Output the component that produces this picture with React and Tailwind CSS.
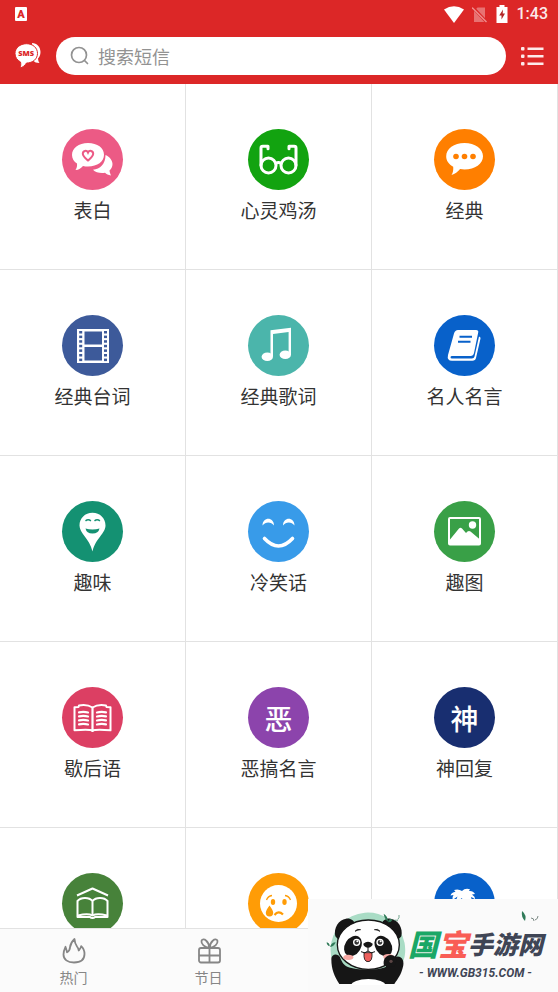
import { useState } from 'react';

const HeartChatIcon = () => (
  <>
    <path d="M43.500 26c4.500 2 7 5.500 7 9 0 3-1.300 5-3 6.500.2 2 .8 3.300 1.500 5-2.800-.3-4.500-1.300-6-2.700-4.500.8-9.500-.3-12-3 7-.6 12.500-5.800 12.500-14.800z" />
    <path d="M26 14C35.500 14 42 19 42 25.800s-6.500 11.700-16 11.700c-1.800 0-3.500-.2-5-.6-2 2.200-4 3.800-7.500 4.200 1.300-2 1.800-4 1.500-6.500-3-2-5-5-5-8.600C10 19 16.500 14 26 14z" />
    <path
      d="M26 31.500c-3-2.500-5.200-4.300-5.200-6.700 0-3 3.800-4.200 5.200-1.200 1.400-3 5.200-1.800 5.200 1.200 0 2.400-2.200 4.200-5.200 6.700z"
      fill="none"
      stroke="#ec5a85"
      strokeWidth="2"
    />
  </>
);

const GlassesIcon = () => (
  <g fill="none" stroke="white" strokeWidth="3" strokeLinecap="round" strokeLinejoin="round">
    <circle cx="20.500" cy="36.500" r="7.500" />
    <circle cx="40.500" cy="36.500" r="7.500" />
    <path d="M13 36V19q0-1.800 1.800-1.800H20v2.500M48 36V19q0-1.800-1.800-1.800H41v2.500M28 34.500q2.500-2 5 0" />
  </g>
);

const ChatIcon = () => (
  <>
    <path d="M30.500 14C41 14 49 19.500 49 27.300S41 40.500 30.500 40.500c-1.500 0-3-.1-4.400-.4-2.500 3-5 5-8.600 6 1.500-2.500 2-5 1.700-8.300-4.300-2.400-7-6-7-10.500C12.200 19.500 20 14 30.500 14z" />
    <g fill="#ff7f00">
      <circle cx="22" cy="27.500" r="2.800" />
      <circle cx="30.500" cy="27.500" r="2.800" />
      <circle cx="39" cy="27.500" r="2.800" />
    </g>
  </>
);

const FilmIcon = () => (
  <>
    <rect x="15" y="14" width="32" height="34" />
    <g fill="#3d5a9a">
      <rect x="22.500" y="16.500" width="17.500" height="13" />
      <rect x="22.500" y="32" width="17.500" height="13.500" />
      {[16, 20.6, 25.2, 29.8, 34.4, 39, 43.6].map((y) => (
        <g key={y}>
          <rect x="17.200" y={y} width="3" height="2.500" />
          <rect x="42" y={y} width="3" height="2.500" />
        </g>
      ))}
    </g>
  </>
);

const MusicIcon = () => (
  <>
    <path d="M22.500 15.200 43 12.800V40h-2.400V17L25 18.900v22.600h-2.500z" />
    <ellipse cx="19.300" cy="41.700" rx="5.700" ry="4.300" />
    <ellipse cx="37.300" cy="39.700" rx="5.700" ry="4.300" />
  </>
);

const NotebookIcon = () => (
  <>
    <path d="M24 15h18q2.800 0 2.200 2.500L40 38q-.6 3-3.500 3H18q-1.500 0-1.500 1.300t1.500 1.300h20q2 0 2.500-2L45 21.500q1.800.5 1.500 2L42 43q-.7 2.800-3.500 2.800H18q-5.300 0-4-5.800l6-21.500Q21 15 24 15z" />
    <path d="M25.500 21.800h12.500M24 26.800h12.500" stroke="#0861ca" strokeWidth="1.900" />
  </>
);

const PinIcon = () => (
  <>
    <path d="M30.500 11.800c7.500 0 13 5.500 13 12.700 0 8-9.800 12.500-13 26-3.200-13.500-13-18-13-26 0-7.200 5.500-12.700 13-12.700z" />
    <g fill="none" stroke="#149172" strokeWidth="1.500">
      <path d="M23.500 19.800q2.700-2.200 5.400 0M32.500 19.800q2.700-2.200 5.400 0" />
    </g>
    <path d="M23.500 27.500q7 1.800 14 0-1 5-7 5t-7-5z" fill="#149172" />
  </>
);

const SmileIcon = () => (
  <>
    <path d="M14.500 24.500c0-9 11.500-9 11.500 0-3-4-8.500-4-11.500 0zM35 24.500c0-9 11.500-9 11.500 0-3-4-8.500-4-11.500 0z" />
    <path d="M16.500 37.500q14 15 28 0" fill="none" stroke="white" strokeWidth="3.600" strokeLinecap="round" />
  </>
);

const ImageIcon = () => (
  <>
    <rect x="15" y="17" width="31" height="26.500" rx="1" fill="none" stroke="white" strokeWidth="2" />
    <circle cx="38.500" cy="24" r="3.700" />
    <path d="M16 38.500 25 27.500q1.500-1.500 3 0l4 4.500 1.500-1.500q1.500-1 3 0L46 38.500V43H16z" />
  </>
);

const OpenBookIcon = () => (
  <g fill="none" stroke="white" strokeLinejoin="round">
    <path d="M30.500 20.500Q25 17 17 18.500l-.5 1.500-4 .3V43.300q13-1.300 18 0 5-1.300 18 0V20.300l-4-.3-.5-1.500q-8-1.500-13.500 2z" strokeWidth="2" />
    <path d="M30.500 20.500V45" strokeWidth="2.200" />
    <path d="M17 25.300q5-.8 9 .2M17 29.300q5-.8 9 .2M17 33.300q5-.8 9 .2M17 37.300q5-.8 9 .2M35 25.500q4-1 9-.2M35 29.500q4-1 9-.2M35 33.500q4-1 9-.2M35 37.500q4-1 9-.2" strokeWidth="2.200" strokeLinecap="round" />
  </g>
);

const LibraryIcon = () => (
  <g fill="none" stroke="white" strokeWidth="2" strokeLinejoin="round">
    <path d="M15 22.500 30.500 15.500 46 22.500" />
    <path d="M30.500 28Q28 25 23 25t-7.500 3v16h12.500q1 1 2.500 1t2.500-1h12.500V28q-2.500-3-7.500-3t-7.500 3v14" />
    <path d="M16 42.500q10-2.500 14.500 0 4.500-2.500 14.500 0" />
  </g>
);

const CryIcon = () => (
  <>
    <circle cx="30.500" cy="30.500" r="18.500" />
    <g fill="#ff9c06">
      <ellipse cx="25" cy="29" rx="2.200" ry="3" />
      <ellipse cx="36.500" cy="29" rx="2.200" ry="3" />
      <path d="M21.500 32.500q3.700 5 3.700 7.300a3.700 3.700 0 0 1-7.400 0q0-2.300 3.700-7.300z" />
    </g>
    <path d="M18.500 27q1.500-4 5.500-4.500M42.500 27q-1.500-4-5.500-4.500" fill="none" stroke="#ff9c06" strokeWidth="1.300" />
    <path d="M26.500 42q4-5 8.500-.5" fill="none" stroke="#ff9c06" strokeWidth="2.200" />
  </>
);

const PalmIcon = () => (
  <path d="M28 18q-3.500-2.500-8-1l1.500 1.800q-4 .7-5 3.700l3-.5q-1.500 2-1 5l5-3.500q-1.500 2.500-1 5.500l5.500-4Q31 35 28 46h6q1-10-.5-20 3 .5 3.500 4 1.500-3.500 0-6 2.500.5 4 2.500-.3-3.500-3-5l3-.5q-2-3.500-6-3l1-1.800q-5-1.500-8 1.800z" />
);

const categories = [
  { name: '表白', color: 'bg-[#ec5a85]', Icon: HeartChatIcon },
  { name: '心灵鸡汤', color: 'bg-[#12a310]', Icon: GlassesIcon },
  { name: '经典', color: 'bg-[#ff7f00]', Icon: ChatIcon },
  { name: '经典台词', color: 'bg-[#3d5a9a]', Icon: FilmIcon },
  { name: '经典歌词', color: 'bg-[#4bb5ab]', Icon: MusicIcon },
  { name: '名人名言', color: 'bg-[#0861ca]', Icon: NotebookIcon },
  { name: '趣味', color: 'bg-[#149172]', Icon: PinIcon },
  { name: '冷笑话', color: 'bg-[#389be9]', Icon: SmileIcon },
  { name: '趣图', color: 'bg-[#39a047]', Icon: ImageIcon },
  { name: '歇后语', color: 'bg-[#dc3f63]', Icon: OpenBookIcon },
  { name: '恶搞名言', color: 'bg-[#8c44ac]', glyph: '恶' },
  { name: '神回复', color: 'bg-[#182e70]', glyph: '神' },
  { name: '', color: 'bg-[#47823a]', Icon: LibraryIcon },
  { name: '', color: 'bg-[#ff9c06]', Icon: CryIcon },
  { name: '', color: 'bg-[#0861ca]', Icon: PalmIcon },
];

const StatusBar = () => (
  <div className="flex h-7 items-center justify-between pl-[15px] pr-2.5">
    <div className="flex h-3.5 w-3 items-center justify-center rounded-[1px] bg-white font-[Roboto] text-[11px] font-black leading-none text-[#dc2727]">
      A
    </div>
    <div className="flex items-center gap-2">
      <svg width="20" height="17" viewBox="0 0 20 17" fill="white">
        <path d="M0 3.500Q10-3 20 3.500L10 17z" />
      </svg>
      <svg width="15" height="17" viewBox="0 0 15 17">
        <path d="M5.500 1.500H13V16H2V5z" fill="white" opacity=".35" />
        <path d="M1 1.500 14.500 16" stroke="#dc2727" strokeWidth="3" />
        <path d="M0 1.500 14.500 16" stroke="#ee8f8f" strokeWidth="1.400" />
      </svg>
      <svg width="14" height="18" viewBox="2 0 14 18">
        <path d="M6.500 0h5v2H14.500v16h-11V2h3z" fill="white" />
        <path d="M10 4.500 6.200 10.500h2.300v4l3.500-6H9.700z" fill="#b32626" />
      </svg>
      <span className="font-[Roboto] text-base font-medium leading-none text-[#fbe9e9]">1:43</span>
    </div>
  </div>
);

const Header = () => {
  const [keyword, setKeyword] = useState('');

  return (
    <header className="shrink-0 bg-[#dc2727]">
      <StatusBar />
      <div className="flex h-14 items-center gap-3.5 px-3.5">
        <a href="#sms" aria-label="短信" className="shrink-0">
          <svg width="28" height="28" viewBox="0 0 28 28">
            <path d="M18 1c5 0 8.500 4 8.500 9 0 3-1 5-2.500 6.500.2 2 .5 3 1.500 4.500-3 0-5-.8-6.500-2.500z" fill="white" />
            <path d="M12.500 1.700c6.500 0 11 4.300 11 9.700S19 21 12.500 21c-1.500 2.500-3.500 4.200-6.500 5 .8-2 1-4 .5-6C3.200 18.200 1 15.200 1 11.500 1 6 6 1.700 12.500 1.700z" fill="white" stroke="#dc2727" strokeWidth="1" />
            <text x="12.200" y="14" textAnchor="middle" fill="#dc2727" fontFamily="Open Sans, sans-serif" fontWeight="800" fontSize="7.500">SMS</text>
          </svg>
        </a>
        <label className="flex h-[38px] min-w-0 flex-1 items-center gap-2 rounded-full bg-white px-3.5">
          <svg width="20" height="20" viewBox="0 0 20 20" fill="none" stroke="#929292" strokeWidth="1.700" strokeLinecap="round" className="shrink-0">
            <circle cx="9" cy="9" r="7.500" />
            <path d="m14.500 14.500 3 3" />
          </svg>
          <input
            type="text"
            aria-label="搜索短信"
            placeholder="搜索短信"
            value={keyword}
            onChange={(e) => setKeyword(e.target.value)}
            className="w-full min-w-0 bg-transparent text-lg text-[#333] outline-none placeholder:text-[#929292]"
          />
        </label>
        <button type="button" aria-label="菜单" className="shrink-0">
          <svg width="24" height="20" viewBox="0 0 24 20" fill="#fdeaea">
            {[1, 8.5, 16].map((y) => (
              <g key={y}>
                <rect x="1" y={y} width="3.500" height="3.500" rx="1" />
                <rect x="7.500" y={y + 0.5} width="16" height="2.500" />
              </g>
            ))}
          </svg>
        </button>
      </div>
    </header>
  );
};

const CategoryCell = ({ name, color, Icon, glyph }) => (
  <a
    href="#category"
    className="flex aspect-square flex-col items-center justify-center gap-1.5 border-b border-r border-[#e2e2e2]"
  >
    <span className={`flex size-[61px] items-center justify-center rounded-full ${color}`}>
      {Icon ? (
        <svg viewBox="0 0 61 61" className="size-full" fill="white">
          <Icon />
        </svg>
      ) : (
        <span className="text-[28px] font-medium leading-none text-white">{glyph}</span>
      )}
    </span>
    <span className="h-7 text-[19px] leading-7 text-[#333]">{name}</span>
  </a>
);

const TabBar = () => (
  <nav className="flex h-16 shrink-0 border-t border-[#e2e2e2] bg-[#fbfbfb] pl-1.5 pr-3 text-sm text-[#868686]">
    <a href="#hot" className="flex w-1/4 flex-col items-center gap-[3px] pt-2">
      <svg width="26" height="27" viewBox="0 0 26 27" fill="none" stroke="#868686" strokeWidth="1.800" strokeLinejoin="round">
        <path d="M13 25.500C6.500 25.500 2.500 22.500 2.500 17.500c0-3 .8-5.200 2-7.700.7 1.500 1 3.200 1.500 5.500 2.500-1.500 3-2.500 3-5 .5-3.500 2-6 4.500-8.300.2 4 1 5.500 2.500 7.500 1 1.200 1.500 2.500 1.700 4 1-1.200 2.200-2.400 2.500-4.400 2.300 2 3.300 5 3.300 8 0 5.400-4 8.400-10.500 8.400z" />
      </svg>
      <span className="leading-5">热门</span>
    </a>
    <a href="#festival" className="flex w-1/4 flex-col items-center gap-[3px] pt-2">
      <svg width="26" height="27" viewBox="0 0 26 27" fill="none" stroke="#868686" strokeWidth="1.800" strokeLinejoin="round">
        <rect x="3" y="11" width="21" height="14.500" rx="2" />
        <path d="M3 18.500h21M13.500 11V25.500M13.500 11C8.500 10.500 5 7 5.500 4c.3-2 3-2 4.500-.5 2 1.700 3.200 4 3.500 7.500zM13.500 11C18.500 10.500 22 7 21.500 4c-.3-2-3-2-4.500-.5-2 1.700-3.200 4-3.500 7.500z" />
      </svg>
      <span className="leading-5">节日</span>
    </a>
  </nav>
);

const Panda = () => (
  <svg width="80" height="74" viewBox="78 156 240 222" className="shrink-0">
    <path d="M118 345A112 112 0 1 1 300 330z" fill="#a9dcc5" />
    <g fill="#161616">
      <path d="M106 232c-6-25 10-50 32-53 14-2 24 6 26 14l-48 50zM304 232c6-25-10-50-32-53-14-2-24 6-26 14l48 50z" />
      <path d="M94 300c0-16 20-18 26-5 5 12 10 24 22 28 30 12 95 12 116 0-4-18 8-32 24-28 22-10 34 10 26 32-5 20-13 30-25 48H118c-14-22-24-42-24-75z" />
    </g>
    <ellipse cx="205" cy="380" rx="52" ry="20" fill="white" />
    <ellipse cx="205" cy="257" rx="93" ry="74" fill="white" stroke="#161616" strokeWidth="4" />
    <g fill="#161616">
      <ellipse cx="159" cy="261" rx="24" ry="33" transform="rotate(32 159 261)" />
      <ellipse cx="250" cy="261" rx="24" ry="33" transform="rotate(-32 250 261)" />
      <path d="M165 217q6-9 17-5-8 0-17 5zM223 212q11-4 17 5-9-5-17-5z" stroke="#161616" strokeWidth="2" />
      <path d="M190 254q14-12 28 0 0 9-14 13-14-4-14-13z" />
    </g>
    <g fill="#333" stroke="white" strokeWidth="4">
      <circle cx="170" cy="250" r="9" />
      <circle cx="240" cy="250" r="9" />
    </g>
    <circle cx="172" cy="247" r="3" fill="white" />
    <circle cx="242" cy="247" r="3" fill="white" />
    <g fill="#f7a9a4">
      <ellipse cx="145" cy="295" rx="15" ry="8" />
      <ellipse cx="265" cy="293" rx="15" ry="8" />
    </g>
    <path d="M192 281h24q2 27-12 27t-12-27z" fill="#ec5f5c" stroke="#161616" strokeWidth="2.500" />
    <path d="M204 267v9q-9 10-21 2M204 276q9 10 21 2" fill="none" stroke="#161616" strokeWidth="3" />
    <path d="M252 320c-6-20 10-38 30-30 10 6 8 26-2 34z" fill="#161616" />
    <circle cx="273" cy="307" r="5" fill="#5b4544" />
    <g fill="#2f7a58">
      <path d="M251 164q13 8 13 24-11-8-13-24zM264 190q3-14 14-8-4 8-14 8zM90 264q4-14 17-14-4 12-17 14zM80 250q9 2 9 12-9-3-9-12z" />
      <path d="M282 184q8-2 12 2M297 168q2 8-4 14" stroke="#2f7a58" strokeWidth="2" fill="none" />
    </g>
  </svg>
);

const SiteBadge = () => (
  <div className="absolute bottom-0 right-0 flex h-[93px] w-[250px] bg-[#fafafa] pl-[18px] pt-3">
    <Panda />
    <div className="relative flex flex-col items-center pl-0.5 pt-3.5 text-[#3f4555]">
      <svg width="18" height="12" viewBox="0 0 18 12" className="absolute right-1 top-0">
        <path d="M1 0q5 4 3 10Q0 6 1 0z" fill="#2f7a58" />
        <path d="M10 7q3 0 3 3M17 5q0 3-3 4" stroke="#7c8a85" fill="none" />
      </svg>
      <div className="flex items-center whitespace-nowrap font-black italic leading-9">
        <span className="text-[30px] text-[#1aa766]">国</span>
        <span className="text-[30px] text-[#f95d55]">宝</span>
        <span className="text-[25px]">手游网</span>
      </div>
      <span className="whitespace-nowrap font-[Roboto] text-xs font-bold italic leading-6">- WWW.GB315.COM -</span>
    </div>
  </div>
);

const App = () => (
  <div className="relative flex h-screen flex-col overflow-hidden bg-white font-['Noto_Sans_CJK_SC',sans-serif]">
    <Header />
    <main className="min-h-0 flex-1 overflow-hidden">
      <div className="grid grid-cols-3">
        {categories.map((category, index) => (
          <CategoryCell key={index} {...category} />
        ))}
      </div>
    </main>
    <TabBar />
    <SiteBadge />
  </div>
);

export default App;
